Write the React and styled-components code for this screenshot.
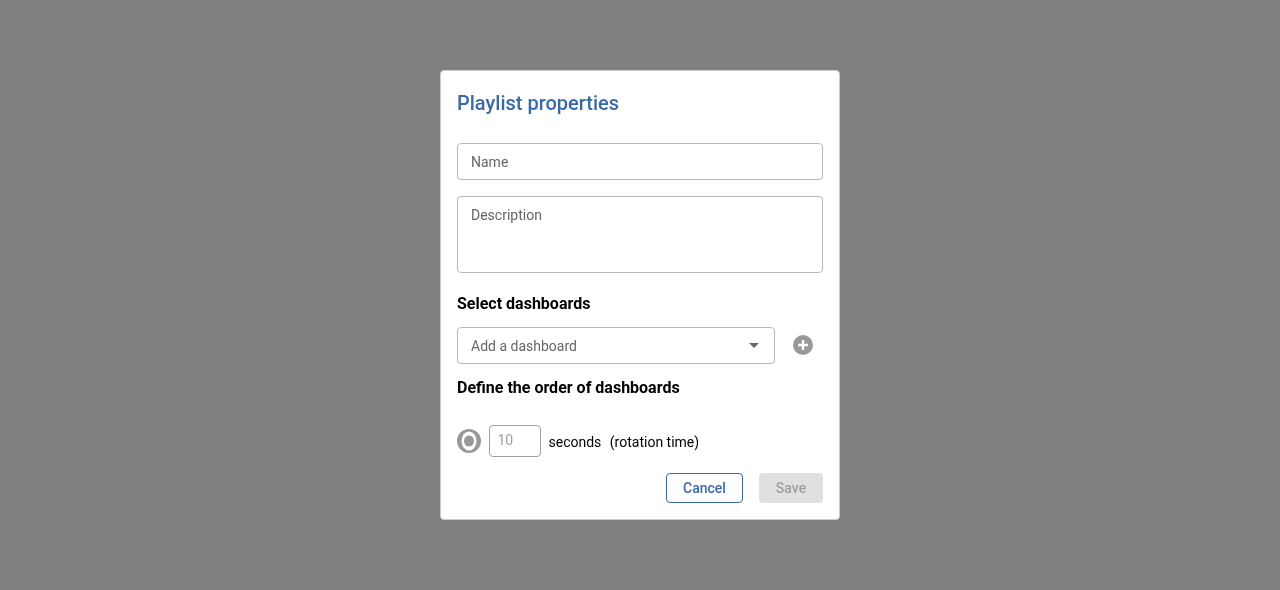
import React from 'react'
import styled, { createGlobalStyle } from 'styled-components'

const GlobalStyle = createGlobalStyle`
  html, body {
    margin: 0;
    height: 100%;
    font-family: Roboto, "Liberation Sans", sans-serif;
  }
  #root {
    height: 100%;
  }
  * {
    box-sizing: border-box;
  }
`

const Backdrop = styled.div`
  display: flex;
  align-items: center;
  justify-content: center;
  height: 100%;
  background-color: #808080;
`

const Dialog = styled.form`
  display: flex;
  flex-direction: column;
  width: 400px;
  height: 450px;
  padding: 16px;
  background-color: #fff;
  border: 1px solid #ccc;
  border-radius: 4px;
  will-change: transform;
`

const Title = styled.h2`
  margin: 0 0 24px;
  height: 32px;
  font-size: 20px;
  line-height: 32px;
  font-weight: 500;
  color: #3a69a8;
`

const Field = styled.div`
  display: flex;
  padding: ${props => props.$top ? '10px' : '2px'} 13px 0;
  margin-bottom: ${props => props.$last ? '21px' : '16px'};
  height: ${props => props.$height}px;
  align-items: ${props => props.$top ? 'flex-start' : 'center'};
  border: 1px solid #b8b8b8;
  border-radius: 4px;
  font-size: 14px;
  line-height: 17px;
  color: #666;
`

const Heading = styled.h3`
  margin: 0;
  height: 20px;
  font-size: 16px;
  line-height: 20px;
  font-weight: 700;
  color: #000;
`

const SelectRow = styled.div`
  display: flex;
  align-items: center;
  margin: 13px 0 14px;
`

const Select = styled.div`
  display: flex;
  align-items: center;
  justify-content: space-between;
  width: 318px;
  height: 37px;
  padding: 1px 15px 0 13px;
  border: 1px solid #b8b8b8;
  border-radius: 4px;
  font-size: 14px;
  color: #666;
`

const Caret = styled.span`
  width: 0;
  height: 0;
  margin-top: -1px;
  border-left: 5px solid transparent;
  border-right: 5px solid transparent;
  border-top: 5px solid #666;
`

const AddIcon = styled.svg`
  width: 20px;
  height: 20px;
  margin-left: 18px;
  margin-top: -1px;
`

const RotationRow = styled.div`
  display: flex;
  align-items: center;
  margin-top: 27px;
  font-size: 14px;
  color: #000;
`

const RotationIcon = styled.svg`
  width: 24px;
  height: 24px;
`

const SecondsInput = styled.div`
  display: flex;
  align-items: center;
  width: 52px;
  height: 32px;
  margin: 0 7.5px 0 8px;
  padding: 0 0 2px 7.5px;
  border: 1px solid #a0a0a0;
  border-radius: 4px;
  color: #9e9e9e;
`

const Label = styled.span`
  margin-top: 2px;
  margin-left: ${props => props.$gap || 0}px;
`

const Actions = styled.div`
  display: flex;
  justify-content: flex-end;
  gap: 16px;
  margin-top: 16px;
`

const Button = styled.div`
  display: flex;
  align-items: center;
  justify-content: center;
  width: ${props => props.$width}px;
  height: 30px;
  border-radius: 4px;
  font-size: 14px;
  font-weight: 500;
  color: ${props => props.$disabled ? '#9e9e9e' : '#3a69a8'};
  background-color: ${props => props.$disabled ? '#e0e0e0' : '#fff'};
  border: ${props => props.$disabled ? 'none' : '1px solid #3a69a8'};
`

export default function App() {
  return (
    <>
      <GlobalStyle />
      <Backdrop>
        <Dialog>
          <Title>Playlist properties</Title>
          <Field $height={37}>Name</Field>
          <Field $height={78} $top $last>Description</Field>
          <Heading>Select dashboards</Heading>
          <SelectRow>
            <Select>
              Add a dashboard
              <Caret />
            </Select>
            <AddIcon viewBox="0 0 20 20">
              <circle cx="10" cy="10" r="10" fill="#999" />
              <path d="M10 5v10M5 10h10" stroke="#fff" strokeWidth="2.4" />
            </AddIcon>
          </SelectRow>
          <Heading>Define the order of dashboards</Heading>
          <RotationRow>
            <RotationIcon viewBox="0 0 24 24">
              <circle cx="12" cy="12" r="12" fill="#999" />
              <ellipse cx="12" cy="12" rx="7.5" ry="9.5" fill="#fff" />
              <ellipse cx="12" cy="12" rx="5" ry="5.5" fill="#999" />
            </RotationIcon>
            <SecondsInput>10</SecondsInput>
            <Label>seconds</Label>
            <Label $gap={8.5}>(rotation time)</Label>
          </RotationRow>
          <Actions>
            <Button $width={77}>Cancel</Button>
            <Button $width={64} $disabled>Save</Button>
          </Actions>
        </Dialog>
      </Backdrop>
    </>
  )
}
